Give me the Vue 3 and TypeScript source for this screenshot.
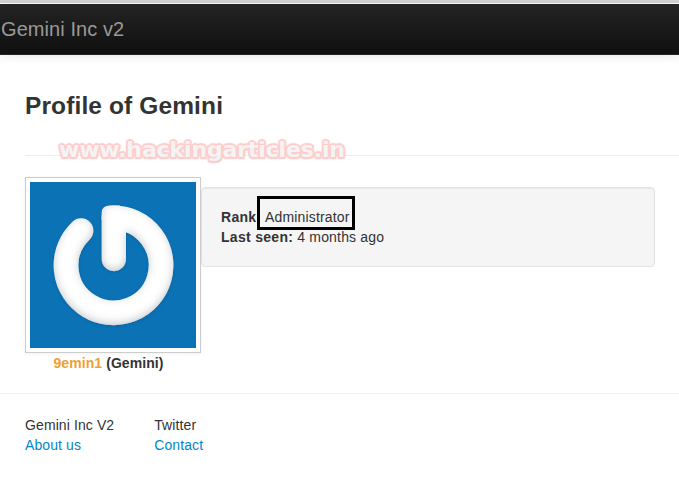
<script setup lang="ts">
const title = 'Gemini Inc v2'
const footerCols = [
  { heading: 'Gemini Inc V2', link: 'About us' },
  { heading: 'Twitter', link: 'Contact' },
]
</script>

<template>
  <div class="page">
    <header class="navbar">
      <a class="brand" href="#">{{ title }}</a>
    </header>

    <main class="content">
      <div class="page-header">
        <h1>Profile of Gemini</h1>
      </div>
      <div class="profile">
        <div class="user">
          <div class="thumbnail">
            <svg class="avatar" viewBox="0 0 166 166" width="166" height="166">
              <defs>
                <filter id="soft" filterUnits="userSpaceOnUse" x="0" y="0" width="166" height="166">
                  <feGaussianBlur in="SourceAlpha" stdDeviation="4" result="blur" />
                  <feOffset in="blur" dx="0" dy="-2" result="off" />
                  <feComposite in="SourceAlpha" in2="off" operator="out" result="inner" />
                  <feFlood flood-color="#7f8c96" flood-opacity="0.6" />
                  <feComposite in2="inner" operator="in" result="shade" />
                  <feGaussianBlur in="SourceAlpha" stdDeviation="1.5" result="drop" />
                  <feOffset in="drop" dy="1" result="dropOff" />
                  <feFlood flood-color="#05406a" flood-opacity="0.3" />
                  <feComposite in2="dropOff" operator="in" result="dropShade" />
                  <feMerge>
                    <feMergeNode in="dropShade" />
                    <feMergeNode in="SourceGraphic" />
                    <feMergeNode in="shade" />
                  </feMerge>
                </filter>
              </defs>
              <rect width="166" height="166" fill="#0b72b5" />
              <g filter="url(#soft)" fill="#fff">
                <path d="M51 48.7A47.5 47.5 0 1 0 84 35.8" fill="none" stroke="#fff" stroke-width="24.8" stroke-linecap="round" />
                <path d="M71.7 77V31Q71.7 23.5 80 23.5H90L96 49.7V77A12.15 12.15 0 0 1 71.7 77Z" />
              </g>
            </svg>
          </div>
          <div class="caption">
            <span class="nick">9emin1</span> <span class="name">(Gemini)</span>
          </div>
        </div>
        <div class="well">
          <div><b>Rank</b><span class="rank-box">Administrator</span></div>
          <div><b>Last seen:</b> 4 months ago</div>
        </div>
      </div>
    </main>

    <footer class="footer">
      <div v-for="col in footerCols" :key="col.heading" class="col">
        <div>{{ col.heading }}</div>
        <a href="#">{{ col.link }}</a>
      </div>
    </footer>

    <div class="watermark">www.hackingarticles.in</div>
  </div>
</template>

<style>
html, body {
  margin: 0;
  background: #fff;
  overflow: hidden;
}
</style>

<style scoped>
.page {
  position: relative;
  height: 477px;
  overflow: hidden;
  padding-top: 4px;
  box-sizing: border-box;
  background: linear-gradient(#d4d4d4 0, #d4d4d4 3px, #fff 3px);
  font-family: "Liberation Sans", Arial, sans-serif;
  font-size: 14px;
  line-height: 20px;
  color: #333;
}

.navbar {
  height: 50px;
  display: flex;
  align-items: center;
  background: linear-gradient(#242424, #0f0f0f);
  border-bottom: 1px solid #252525;
  box-sizing: content-box;
  box-shadow: 0 1px 10px rgba(0, 0, 0, 0.1);
}

.brand {
  margin-left: 1px;
  font-size: 20px;
  letter-spacing: 0.08px;
  color: #999;
  text-decoration: none;
}

.content {
  padding-left: 25px;
}

.page-header {
  height: 101px;
  border-bottom: 1px solid #eee;
  box-sizing: border-box;
  padding-top: 35px;
}

h1 {
  margin: 0;
  font-size: 24.5px;
  line-height: 32px;
  font-weight: 700;
  letter-spacing: 0.12px;
}

.profile {
  display: flex;
  align-items: flex-start;
  margin-top: 21px;
}

.thumbnail {
  width: 166px;
  height: 166px;
  padding: 4px;
  border: 1px solid #ccc;
  box-shadow: 0 1px 3px rgba(0, 0, 0, 0.055);
}

.avatar {
  display: block;
}

.caption {
  padding-right: 9px;
  text-align: center;
  font-weight: 700;
  letter-spacing: 0.08px;
}

.nick {
  color: #f0a030;
}

.well {
  width: 454px;
  height: 80px;
  margin-top: 10px;
  padding: 19px;
  box-sizing: border-box;
  background: #f5f5f5;
  border: 1px solid #e3e3e3;
  border-radius: 4px;
  box-shadow: inset 0 1px 1px rgba(0, 0, 0, 0.05);
  letter-spacing: 0.17px;
}

.well b {
  letter-spacing: 0.3px;
}

.rank-box {
  display: inline-block;
  margin: -14px 0 -10px 0.5px;
  padding: 9px 2.5px 0 5px;
  border: 3px solid #000;
  line-height: 19px;
}

.footer {
  display: flex;
  gap: 40px;
  margin-top: 20px;
  padding: 21px 25px 0;
  border-top: 1px solid #eee;
  letter-spacing: 0.1px;
}

.footer a {
  color: #08c;
  text-decoration: none;
}

.watermark {
  position: absolute;
  left: 59px;
  top: 135px;
  font-family: "DejaVu Sans", sans-serif;
  font-size: 22px;
  letter-spacing: -0.14px;
  line-height: 30px;
  font-weight: 700;
  color: #f4f4f4;
  white-space: nowrap;
  -webkit-text-stroke: 0.6px #f4f4f4;
  paint-order: stroke fill;
  text-shadow: 2px 0 1px #ffcccc, -2px 0 1px #ffcccc, 0 2px 1px #ffcccc, 0 -2px 1px #ffcccc,
    1.5px 1.5px 1px #ffcccc, -1.5px 1.5px 1px #ffcccc, 1.5px -1.5px 1px #ffcccc, -1.5px -1.5px 1px #ffcccc;
}
</style>
